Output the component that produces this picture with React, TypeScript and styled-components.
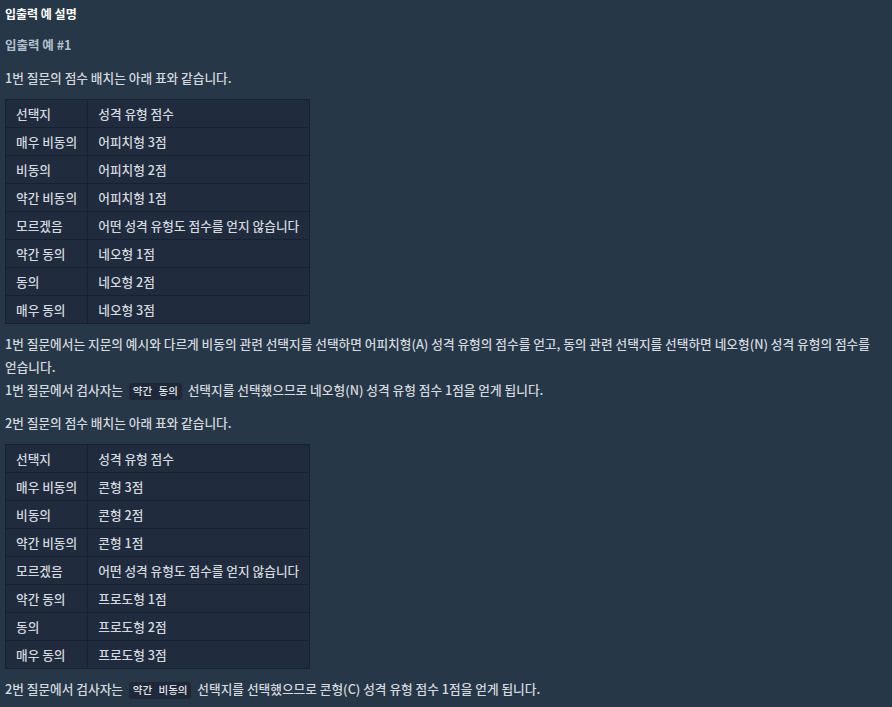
import React from "react";
import styled, { createGlobalStyle } from "styled-components";

const Global = createGlobalStyle`
  html, body { margin: 0; padding: 0; background: #263747; }
  body { font-family: "Noto Sans CJK KR", "Noto Sans", sans-serif; }
`;

const Page = styled.div`
  padding: 2px 5px 0 5px;
  color: #d5d9df;
  font-size: 12.7px;
  font-weight: 500;
  line-height: 23px;
  background: #263747;
  min-height: 707px;
  box-sizing: border-box;
`;

const Title = styled.h5`
  margin: 0 0 8px 0;
  font-size: 12px;
  font-weight: 700;
  color: #ffffff;
  line-height: 23px;
`;

const SubTitle = styled.h6`
  margin: 0 0 10px 0;
  font-size: 12.5px;
  font-weight: 700;
  color: #b2c0cc;
  line-height: 23px;
`;

const Para = styled.p`
  margin: 0 0 10px 0;
  word-break: keep-all;
`;

const Table = styled.table`
  border-collapse: collapse;
  background: #202b3d;
  margin: 0 0 8px 0;
  border: 1px solid #172130;
`;

const Cell = styled.td`
  border: 1px solid #172130;
  padding: 2px 10px;
  height: 23px;
  line-height: 23px;
  white-space: nowrap;
  color: #d5d9df;
`;

const Code = styled.code`
  display: inline-block;
  font-family: "DejaVu Sans Mono", "Noto Sans CJK KR", monospace;
  font-size: 10.5px;
  line-height: 17px;
  padding: 0 4px;
  margin: 0 2px;
  background: #1e2838;
  border: 1px solid #2a3648;
  border-radius: 4px;
  color: #e4e7eb;
  vertical-align: middle;
`;

type Row = [string, string];

const table1: Row[] = [
  ["선택지", "성격 유형 점수"],
  ["매우 비동의", "어피치형 3점"],
  ["비동의", "어피치형 2점"],
  ["약간 비동의", "어피치형 1점"],
  ["모르겠음", "어떤 성격 유형도 점수를 얻지 않습니다"],
  ["약간 동의", "네오형 1점"],
  ["동의", "네오형 2점"],
  ["매우 동의", "네오형 3점"],
];

const table2: Row[] = [
  ["선택지", "성격 유형 점수"],
  ["매우 비동의", "콘형 3점"],
  ["비동의", "콘형 2점"],
  ["약간 비동의", "콘형 1점"],
  ["모르겠음", "어떤 성격 유형도 점수를 얻지 않습니다"],
  ["약간 동의", "프로도형 1점"],
  ["동의", "프로도형 2점"],
  ["매우 동의", "프로도형 3점"],
];

const ScoreTable: React.FC<{ rows: Row[] }> = ({ rows }) => (
  <Table>
    <tbody>
      {rows.map((r, i) => (
        <tr key={i}>
          <Cell>{r[0]}</Cell>
          <Cell>{r[1]}</Cell>
        </tr>
      ))}
    </tbody>
  </Table>
);

export default function App() {
  return (
    <>
      <Global />
      <Page>
        <Title>입출력 예 설명</Title>
        <SubTitle>입출력 예 #1</SubTitle>
        <Para>1번 질문의 점수 배치는 아래 표와 같습니다.</Para>
        <ScoreTable rows={table1} />
        <Para>
          1번 질문에서는 지문의 예시와 다르게 비동의 관련 선택지를 선택하면 어피치형(A) 성격 유형의 점수를 얻고, 동의 관련 선택지를 선택하면 네오형(N) 성격 유형의 점수를 얻습니다.
          <br />
          1번 질문에서 검사자는 <Code>약간 동의</Code> 선택지를 선택했으므로 네오형(N) 성격 유형 점수 1점을 얻게 됩니다.
        </Para>
        <Para>2번 질문의 점수 배치는 아래 표와 같습니다.</Para>
        <ScoreTable rows={table2} />
        <Para>
          2번 질문에서 검사자는 <Code>약간 비동의</Code> 선택지를 선택했으므로 콘형(C) 성격 유형 점수 1점을 얻게 됩니다.
        </Para>
      </Page>
    </>
  );
}
